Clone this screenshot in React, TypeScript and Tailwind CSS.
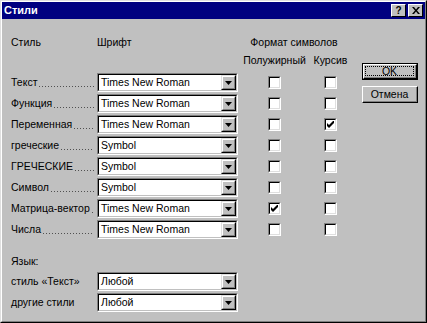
import React from 'react';

type Row = { label: string; font: string; bold: boolean; italic: boolean };

const rows: Row[] = [
  { label: 'Текст', font: 'Times New Roman', bold: false, italic: false },
  { label: 'Функция', font: 'Times New Roman', bold: false, italic: false },
  { label: 'Переменная', font: 'Times New Roman', bold: false, italic: true },
  { label: 'греческие', font: 'Symbol', bold: false, italic: false },
  { label: 'ГРЕЧЕСКИЕ', font: 'Symbol', bold: false, italic: false },
  { label: 'Символ', font: 'Symbol', bold: false, italic: false },
  { label: 'Матрица-вектор', font: 'Times New Roman', bold: true, italic: false },
  { label: 'Числа', font: 'Times New Roman', bold: false, italic: false },
];

const Combo = ({ value }: { value: string }) => (
  <div className="w-[141px] h-[19px] border border-t-[#808080] border-l-[#808080] border-r-white border-b-white">
    <div className="flex h-full border border-t-black border-l-black border-r-[#c0c0c0] border-b-[#c0c0c0] bg-white">
      <span className="flex-1 pl-[2px] leading-[15px] text-black whitespace-nowrap">{value}</span>
      <div className="w-[15px] h-full border border-t-[#dfdfdf] border-l-[#dfdfdf] border-r-black border-b-black">
        <div className="flex items-center justify-center h-full bg-[#c0c0c0] border border-t-white border-l-white border-r-[#808080] border-b-[#808080]">
          <svg width="7" height="4" viewBox="0 0 7 4">
            <path d="M0 0h7L3.5 4z" fill="#000" />
          </svg>
        </div>
      </div>
    </div>
  </div>
);

const Check = ({ checked }: { checked: boolean }) => (
  <div className="w-[13px] h-[13px] border border-t-[#808080] border-l-[#808080] border-r-white border-b-white">
    <div className="flex items-center justify-center h-full bg-white border border-t-black border-l-black border-r-[#dfdfdf] border-b-[#dfdfdf]">
      {checked && (
        <svg width="7" height="7" viewBox="0 0 7 7">
          <path d="M0 2v3l2 2 5-5V-1L2 4z" fill="#000" />
        </svg>
      )}
    </div>
  </div>
);

// label with a dotted leader up to the combo box
const Label = ({ text }: { text: string }) => (
  <div className="w-[86px] flex items-end pr-[3px] whitespace-nowrap leading-[19px]">
    <span>{text}</span>
    <div className="flex-1 h-[1px] mb-[5px] ml-[2px] bg-[linear-gradient(to_right,#505050_1px,transparent_1px)] bg-[length:3px_1px]" />
  </div>
);

export default function App() {
  return (
    <div className="w-[427px] h-[323px] bg-[#c0c0c0] border border-t-[#dfdfdf] border-l-[#dfdfdf] border-r-black border-b-black font-['Liberation_Sans',Arial,sans-serif] text-[10.5px] text-black">
      <div className="flex flex-col h-full border border-t-white border-l-white border-r-[#808080] border-b-[#808080]">
        {/* Title bar */}
        <div className="flex items-center h-[17px] bg-[#000080] pl-[2px] pr-[2px]">
          <span className="flex-1 text-white font-bold text-[11px]">Стили</span>
          <div className="w-[15px] h-[13px] border border-t-white border-l-white border-r-black border-b-black bg-[#c0c0c0] flex items-center justify-center text-[10px] font-bold leading-none">
            ?
          </div>
          <div className="ml-[2px] w-[15px] h-[13px] border border-t-white border-l-white border-r-black border-b-black bg-[#c0c0c0] flex items-center justify-center">
            <svg width="8" height="7" viewBox="0 0 8 7">
              <path d="M0 0h2l2 2.5L6 0h2L5 3.5 8 7H6L4 4.5 2 7H0l3-3.5z" fill="#000" />
            </svg>
          </div>
        </div>

        {/* Body */}
        <div className="flex flex-1 pl-[9px]">
          <div className="flex flex-col">
            <div className="flex mt-[17px] h-[12px] leading-[12px]">
              <span className="w-[86px]">Стиль</span>
              <span className="w-[141px]">Шрифт</span>
              <span className="w-[112px] text-center">Формат символов</span>
            </div>
            <div className="flex mt-[6px] h-[12px] leading-[12px]">
              <span className="w-[227px]" />
              <span className="w-[73px] text-center">Полужирный</span>
              <span className="w-[39px] text-center">Курсив</span>
            </div>
            <div className="flex flex-col gap-[2px] mt-[7px]">
              {rows.map((r) => (
                <div key={r.label} className="flex h-[19px]">
                  <Label text={r.label} />
                  <Combo value={r.font} />
                  <div className="w-[73px] flex items-center justify-center">
                    <Check checked={r.bold} />
                  </div>
                  <div className="w-[39px] flex items-center justify-center">
                    <Check checked={r.italic} />
                  </div>
                </div>
              ))}
            </div>
            <div className="mt-[16px] h-[12px] leading-[12px]">Язык:</div>
            <div className="flex flex-col gap-[2px] mt-[5px]">
              <div className="flex h-[19px]">
                <span className="w-[86px] leading-[19px]">стиль «Текст»</span>
                <Combo value="Любой" />
              </div>
              <div className="flex h-[19px]">
                <span className="w-[86px] leading-[19px]">другие стили</span>
                <Combo value="Любой" />
              </div>
            </div>
          </div>

          {/* Buttons */}
          <div className="flex flex-col ml-[12px] mt-[44px] gap-[6px]">
            <div className="w-[56px] h-[17px] border border-black">
              <div className="h-full border border-t-white border-l-white border-r-black border-b-black">
                <div className="h-full flex items-center justify-center p-[1px] border-r border-b border-r-[#808080] border-b-[#808080]">
                  <div className="w-full h-full flex items-center justify-center border border-dotted border-black leading-none">
                    OK
                  </div>
                </div>
              </div>
            </div>
            <div className="w-[56px] h-[17px] border border-t-white border-l-white border-r-black border-b-black">
              <div className="h-full flex items-center justify-center border-r border-b border-r-[#808080] border-b-[#808080] leading-none">
                Отмена
              </div>
            </div>
          </div>
        </div>
      </div>
    </div>
  );
}
